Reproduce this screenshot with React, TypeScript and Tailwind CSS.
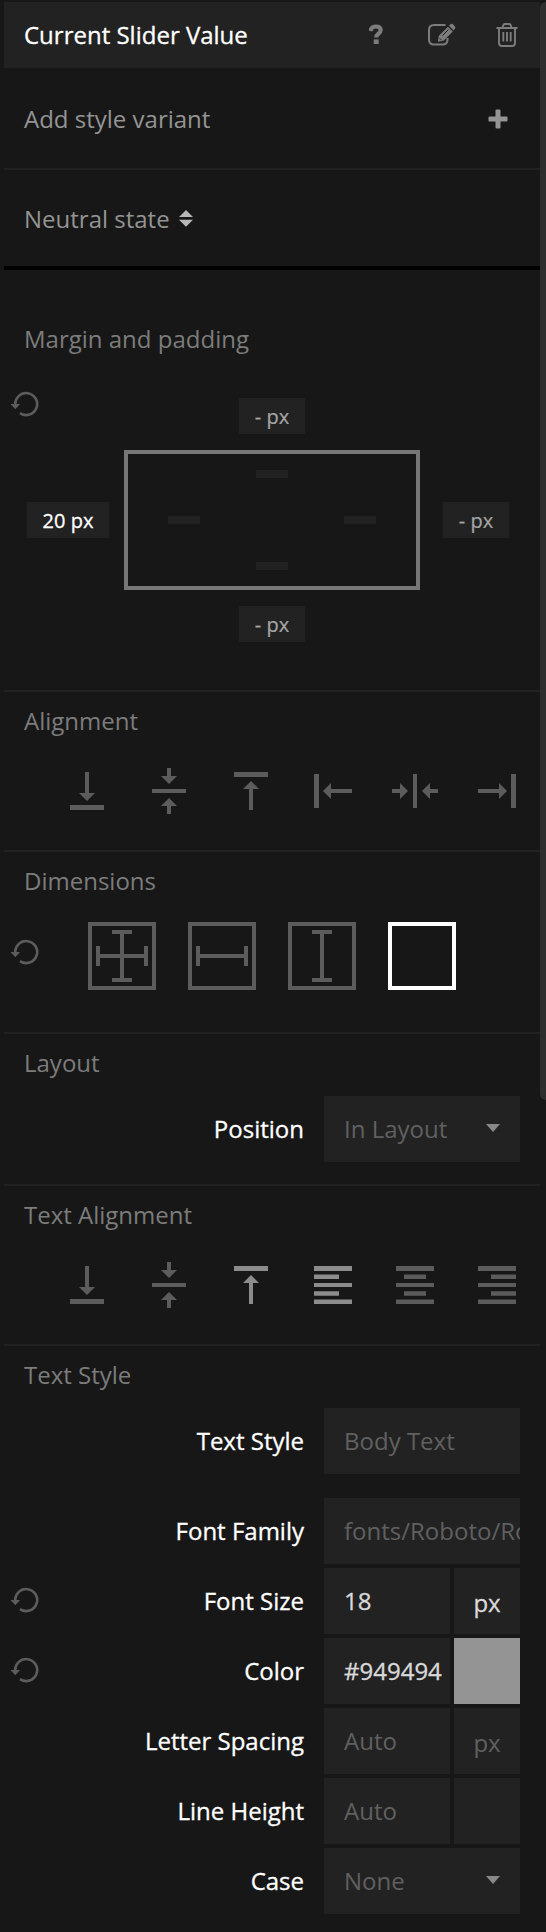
import React from "react";

type Kind = "bottom" | "middle" | "top" | "left" | "center" | "right" | "tleft" | "tcenter" | "tright";

const shapes: Record<Kind, string> = {
  bottom: "M21 4h4v21h6l-8 8-8-8h6zM6 37h34v5H6z",
  middle: "M21 0h4v8h6l-8 8-8-8h6zM6 21h34v4H6zM21 46h4v-8h6l-8-8-8 8h6z",
  top: "M6 4h34v5H6zM21 42h4V21h6l-8-8-8 8h6z",
  left: "M4 6h5v34H4zM42 21v4H21v6l-8-8 8-8v6z",
  center: "M21 6h4v34h-4zM0 21v4h8v6l8-8-8-8v6zM46 21v4h-8v6l-8-8 8-8v6z",
  right: "M37 6h5v34h-5zM4 21v4h21v6l8-8-8-8v6z",
  tleft: "M4 4h38v5H4zM4 12.5h25v4.5H4zM4 21h38v4H4zM4 29.2h25v4.6H4zM4 37.5h38v4.5H4z",
  tcenter: "M4 4h38v5H4zM12 12.5h22v4.5H12zM4 21h38v4H4zM12 29.2h22v4.6H12zM4 37.5h38v4.5H4z",
  tright: "M4 4h38v5H4zM17 12.5h25v4.5H17zM4 21h38v4H4zM17 29.2h25v4.6H17zM4 37.5h38v4.5H4z",
};

function AlignIcon({ kind, active }: { kind: Kind; active?: boolean }) {
  return (
    <svg width="46" height="46" viewBox="0 0 46 46" className={active ? "fill-[#8c8c8c]" : "fill-[#5c5c5c]"}>
      <path d={shapes[kind]} />
    </svg>
  );
}

function IconRow({ kinds, active = [] }: { kinds: Kind[]; active?: Kind[] }) {
  return (
    <div className="mt-[31px] flex gap-9 pl-15">
      {kinds.map((k) => (
        <AlignIcon key={k} kind={k} active={active.includes(k)} />
      ))}
    </div>
  );
}

function ResetIcon() {
  return (
    <svg width="28" height="26" viewBox="0 0 28 26" className="shrink-0">
      <path d="M4.200 14A11 11 0 1 1 9 22.200" fill="none" stroke="#5c5c5c" strokeWidth="2.600" />
      <path d="M-.5 13h9.600l-4.800 5.200z" fill="#5c5c5c" />
    </svg>
  );
}

function Section({ title, height, children }: { title: string; height: string; children: React.ReactNode }) {
  return (
    <section className={`border-t-2 border-[#222] pt-3 ${height}`}>
      <h2 className="pl-5 text-[#7c7c7c]">{title}</h2>
      {children}
    </section>
  );
}

function Row({ label, reset, className = "", children }: { label: string; reset?: boolean; className?: string; children: React.ReactNode }) {
  return (
    <div className={`flex h-[66px] items-center ${className}`}>
      <div className="w-[34px] pb-0.5 pl-[7px]">{reset && <ResetIcon />}</div>
      <div className="w-[266px] pb-0.5 text-right text-white [-webkit-text-stroke:0.3px]">{label}</div>
      <div className="ml-5 flex h-full w-[196px] gap-1">{children}</div>
    </div>
  );
}

function Field({ text, lit, wide, caret }: { text: string; lit?: boolean; wide?: boolean; caret?: boolean }) {
  return (
    <div className={`flex h-full items-center justify-between overflow-hidden whitespace-nowrap bg-[#222] pb-0.5 pl-5 ${wide ? "w-[196px]" : "w-[126px]"} ${lit ? "text-[#d9d9d9] [-webkit-text-stroke:0.3px]" : "text-[#606060]"}`}>
      {text}
      {caret && (
        <svg width="14" height="8" viewBox="0 0 14 8" className="mr-5 fill-[#888]">
          <path d="M0 0h14L7 8z" />
        </svg>
      )}
    </div>
  );
}

function Unit({ text = "", lit }: { text?: string; lit?: boolean }) {
  return <div className={`flex h-full w-[66px] items-center justify-center bg-[#222] pt-0.5 ${lit ? "text-[#d9d9d9] [-webkit-text-stroke:0.3px]" : "text-[#606060]"}`}>{text}</div>;
}

function Badge({ text, lit }: { text: string; lit?: boolean }) {
  return (
    <div className={`flex h-9 items-center justify-center rounded-[1px] bg-[#222] text-[20px] ${lit ? "w-[82px] text-white [-webkit-text-stroke:0.3px]" : "w-[66px] text-[#a5a5a5] [-webkit-text-stroke:0.2px]"}`}>
      {text}
    </div>
  );
}

function Dash() {
  return <div className="h-2 w-8 bg-[#222]" />;
}

function SizeBox({ h, v, active }: { h?: boolean; v?: boolean; active?: boolean }) {
  return (
    <div className={`size-[68px] border-4 ${active ? "border-white" : "border-[#5c5c5c]"}`}>
      <svg width="60" height="60" viewBox="0 0 60 60" className="fill-[#5c5c5c]">
        {h && <path d="M4 20h4v8h44v-8h4v20h-4v-8H8v8H4z" />}
        {v && <path d="M20 4h20v4h-8v44h8v4H20v-4h8V8h-8z" />}
      </svg>
    </div>
  );
}

export default function App() {
  return (
    <div className="flex h-[1932px] w-[546px] bg-[#171717] pt-0.5 pl-1 font-['Open_Sans',sans-serif] text-[24px] leading-[33px]">
      <main className="w-[536px]">
        <header className="flex h-[66px] items-center bg-[#222] pl-5 text-white">
          <h1 className="w-[345px] pb-0.5 [-webkit-text-stroke:0.3px]">Current Slider Value</h1>
          <svg width="14" height="20" viewBox="0 0 14 20" className="-mt-0.5">
            <path d="M1.400 7C2 3.800 4 2.500 7 2.500c3 0 4.700 1.300 4.700 3.600 0 3.600-4.500 3.600-4.500 7.400" fill="none" stroke="#7c7c7c" strokeWidth="4.200" />
            <path d="M4.700 15.400h5V20h-5z" fill="#7c7c7c" />
          </svg>
          <svg width="28" height="23" viewBox="0 0 28 23" className="ml-[44px] -mt-0.5 overflow-visible">
            <path d="M18.500 2H7Q2 2 2 7v9.500q0 5 5 5h8.500q5 0 5-5v-1.500" fill="none" stroke="#7c7c7c" strokeWidth="2" />
            <path d="M10.800 18.800l1-6L21 3.800l4.800 4.800-9.200 9.200zM22 2.800l1.700-1.700q1-.8 1.900 0L28 3.500q.8 1 0 1.900L26.700 7.600z" fill="#7c7c7c" />
            <path d="M12.800 15.500l1.800 1.800M15.500 12.500L21.500 6.500" stroke="#222" strokeWidth="1" />
          </svg>
          <svg width="22" height="24" viewBox="0 0 22 24" className="ml-[41px]">
            <path d="M.5 5h21M6.500 5Q7 1 9 1h4q2 0 2.500 4M3 5v15q0 3 3 3h10q3 0 3-3V5M7.300 9v9.500M11 9v9.500M14.700 9v9.500" fill="none" stroke="#7c7c7c" strokeWidth="1.900" />
          </svg>
        </header>
        <div className="flex h-[100px] items-center justify-between pt-px pr-8 pl-5 text-[#949494]">
          Add style variant
          <svg width="20" height="20" viewBox="0 0 20 20" className="fill-[#949494]">
            <rect x="0.500" y="7.500" width="19" height="5" rx="1" />
            <rect x="7.500" y="0.500" width="5" height="19" rx="1" />
          </svg>
        </div>
        <div className="flex h-[98px] items-center border-t-2 border-[#222] pt-px pl-5 text-[#949494]">
          Neutral state
          <svg width="14" height="17" viewBox="0 0 14 17" className="ml-[9px] fill-[#b8b8b8]">
            <path d="M0 7l7-7 7 7zM0 9.800h14l-7 7z" />
          </svg>
        </div>
        <section className="h-[424px] border-t-4 border-black pt-[52px]">
          <h2 className="pl-5 text-[#7c7c7c]">Margin and padding</h2>
          <div className="mt-[37px] grid h-[252px] grid-cols-[120px_296px_120px] grid-rows-[52px_140px_60px] pt-[6px]">
            <div className="-mt-[7px] pl-[7px]"><ResetIcon /></div>
            <div className="flex justify-center"><Badge text="- px" /></div>
            <div />
            <div className="flex items-center pl-[23px]"><Badge text="20 px" lit /></div>
            <div className="flex flex-col items-center justify-between border-4 border-[#777] py-4">
              <Dash />
              <div className="flex w-full justify-between px-10"><Dash /><Dash /></div>
              <Dash />
            </div>
            <div className="flex items-center pl-[23px]"><Badge text="- px" /></div>
            <div />
            <div className="flex items-start justify-center pt-4"><Badge text="- px" /></div>
          </div>
        </section>
        <Section title="Alignment" height="h-[160px]">
          <IconRow kinds={["bottom", "middle", "top", "left", "center", "right"]} />
        </Section>
        <Section title="Dimensions" height="h-[182px]">
          <div className="mt-[25px] flex pl-[7px]">
            <div className="mt-[17px] w-[77px]"><ResetIcon /></div>
            <div className="flex gap-8">
              <SizeBox h v />
              <SizeBox h />
              <SizeBox v />
              <SizeBox active />
            </div>
          </div>
        </Section>
        <Section title="Layout" height="h-[152px]">
          <Row label="Position" className="mt-[17px]"><Field text="In Layout" wide caret /></Row>
        </Section>
        <Section title="Text Alignment" height="h-[160px]">
          <IconRow kinds={["bottom", "middle", "top", "tleft", "tcenter", "tright"]} active={["top", "tleft"]} />
        </Section>
        <Section title="Text Style" height="h-[588px]">
          <Row label="Text Style" className="mt-[17px]"><Field text="Body Text" wide /></Row>
          <div className="mt-6 flex flex-col gap-1">
            <Row label="Font Family"><Field text="fonts/Roboto/Roboto" wide /></Row>
            <Row label="Font Size" reset><Field text="18" lit /><Unit text="px" lit /></Row>
            <Row label="Color" reset><Field text="#949494" lit /><div className="h-full w-[66px] bg-[#949494]" /></Row>
            <Row label="Letter Spacing"><Field text="Auto" /><Unit text="px" /></Row>
            <Row label="Line Height"><Field text="Auto" /><Unit /></Row>
            <Row label="Case"><Field text="None" wide caret /></Row>
          </div>
        </Section>
      </main>
      <div className="h-[1098px] w-1.5 rounded-l-[6px] bg-[#2e2e2e]" />
    </div>
  );
}
